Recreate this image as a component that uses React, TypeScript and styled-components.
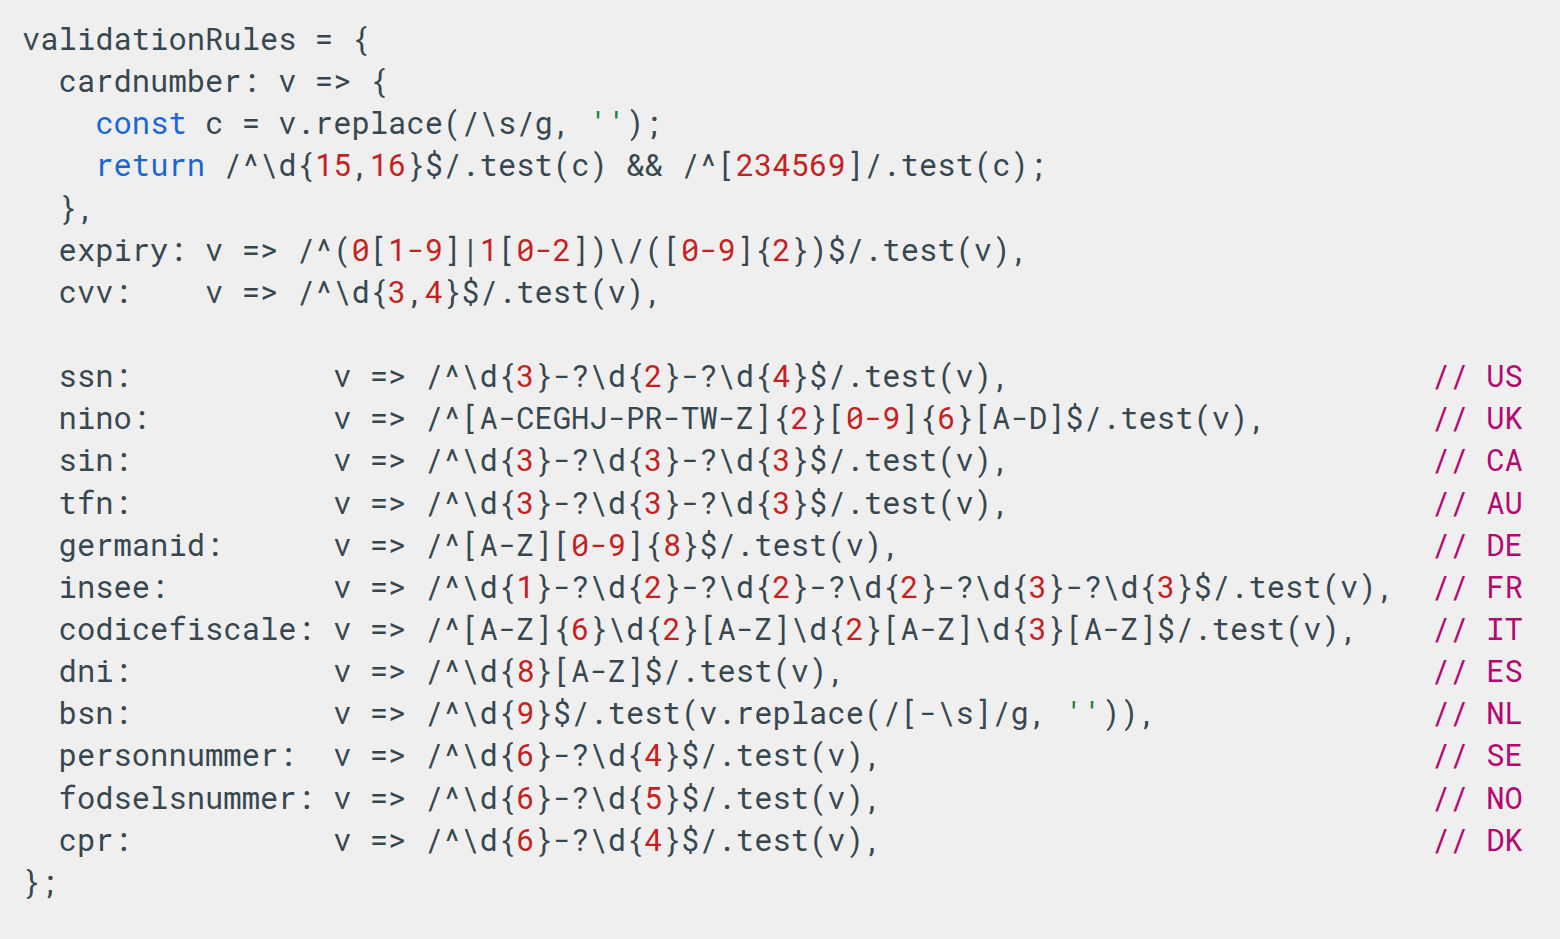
import React from "react";
import styled, { createGlobalStyle } from "styled-components";

const Global = createGlobalStyle`
  html, body { margin: 0; padding: 0; background: #efefef; }
`;

const Page = styled.div`
  width: 1560px;
  height: 939px;
  background: #efefef;
  box-sizing: border-box;
  padding: 17px 0 0 22px;
  overflow: hidden;
`;

const Code = styled.pre`
  margin: 0;
  font-family: "Roboto Mono", "DejaVu Sans Mono", "Liberation Mono", monospace;
  font-size: 30.5px;
  line-height: 42.15px;
  color: #37474f;
  white-space: pre;
`;

const Line = styled.div`
  height: 42.15px;
`;

type Kind = "plain" | "kw" | "num" | "str" | "cmt";

const colors: Record<Kind, string> = {
  plain: "#37474f",
  kw: "#1967d2",
  num: "#c5221f",
  str: "#188038",
  cmt: "#b5076f",
};

const Tok = styled.span<{ $kind: Kind }>`
  color: ${(p) => colors[p.$kind]};
`;

const field = (name: string, body: string, country: string) =>
  ("  " + (name + ":").padEnd(15) + "v => " + body).padEnd(77) + "// " + country;

const source = [
  "validationRules = {",
  "  cardnumber: v => {",
  "    const c = v.replace(/\\s/g, '');",
  "    return /^\\d{15,16}$/.test(c) && /^[234569]/.test(c);",
  "  },",
  "  expiry: v => /^(0[1-9]|1[0-2])\\/([0-9]{2})$/.test(v),",
  "  cvv:    v => /^\\d{3,4}$/.test(v),",
  "",
  field("ssn", "/^\\d{3}-?\\d{2}-?\\d{4}$/.test(v),", "US"),
  field("nino", "/^[A-CEGHJ-PR-TW-Z]{2}[0-9]{6}[A-D]$/.test(v),", "UK"),
  field("sin", "/^\\d{3}-?\\d{3}-?\\d{3}$/.test(v),", "CA"),
  field("tfn", "/^\\d{3}-?\\d{3}-?\\d{3}$/.test(v),", "AU"),
  field("germanid", "/^[A-Z][0-9]{8}$/.test(v),", "DE"),
  field("insee", "/^\\d{1}-?\\d{2}-?\\d{2}-?\\d{2}-?\\d{3}-?\\d{3}$/.test(v),", "FR"),
  field("codicefiscale", "/^[A-Z]{6}\\d{2}[A-Z]\\d{2}[A-Z]\\d{3}[A-Z]$/.test(v),", "IT"),
  field("dni", "/^\\d{8}[A-Z]$/.test(v),", "ES"),
  field("bsn", "/^\\d{9}$/.test(v.replace(/[-\\s]/g, '')),", "NL"),
  field("personnummer", "/^\\d{6}-?\\d{4}$/.test(v),", "SE"),
  field("fodselsnummer", "/^\\d{6}-?\\d{5}$/.test(v),", "NO"),
  field("cpr", "/^\\d{6}-?\\d{4}$/.test(v),", "DK"),
  "};",
];

const tokenRe = /(\/\/ [A-Z]{2}$)|('[^']*')|\b(const|return)\b|(\d-\d|\d+)/g;

function tokenize(line: string): { kind: Kind; text: string }[] {
  const out: { kind: Kind; text: string }[] = [];
  let last = 0;
  let m: RegExpExecArray | null;
  tokenRe.lastIndex = 0;
  while ((m = tokenRe.exec(line))) {
    if (m.index > last) out.push({ kind: "plain", text: line.slice(last, m.index) });
    const kind: Kind = m[1] ? "cmt" : m[2] ? "str" : m[3] ? "kw" : "num";
    out.push({ kind, text: m[0] });
    last = m.index + m[0].length;
  }
  if (last < line.length) out.push({ kind: "plain", text: line.slice(last) });
  return out;
}

export default function App() {
  return (
    <Page>
      <Global />
      <Code>
        {source.map((line, i) => (
          <Line key={i}>
            {tokenize(line).map((t, j) => (
              <Tok key={j} $kind={t.kind}>
                {t.text}
              </Tok>
            ))}
          </Line>
        ))}
      </Code>
    </Page>
  );
}
